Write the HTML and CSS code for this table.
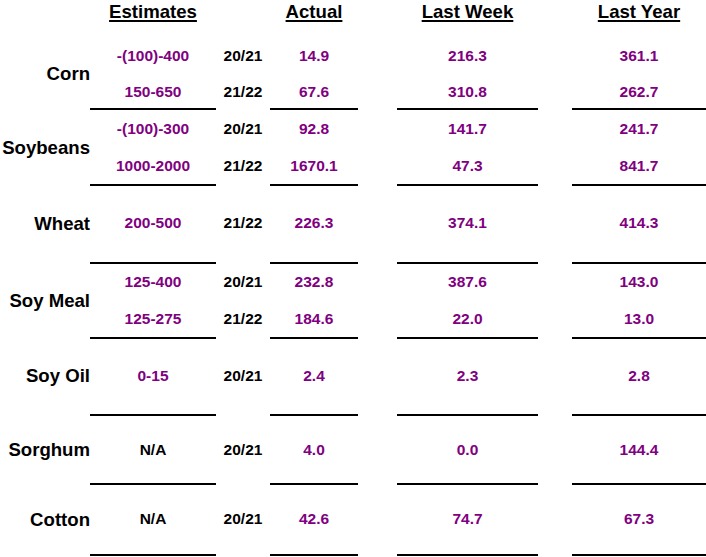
FILE: index.html
```html
<!DOCTYPE html>
<html lang="en">
<head>
<meta charset="utf-8">
<title>Export Sales</title>
<link rel="stylesheet" href="styles.css">
</head>
<body>
<div class="sheet">
  <div class="head">
    <div class="h c-est">Estimates</div>
    <div class="h c-act">Actual</div>
    <div class="h c-wk">Last Week</div>
    <div class="h c-ly">Last Year</div>
  </div>

  <div class="group g-corn">
    <div class="rows">
      <div class="label span2">Corn</div>
      <div class="cell c-est">-(100)-400</div><div class="cell yr c-yr">20/21</div><div class="cell c-act">14.9</div><div class="cell c-wk">216.3</div><div class="cell c-ly">361.1</div>
      <div class="cell c-est">150-650</div><div class="cell yr c-yr">21/22</div><div class="cell c-act">67.6</div><div class="cell c-wk">310.8</div><div class="cell c-ly">262.7</div>
    </div>
    <div class="rules"><span class="rule c-est"></span><span class="rule c-act"></span><span class="rule c-wk"></span><span class="rule c-ly"></span></div>
  </div>

  <div class="group g-soy">
    <div class="rows">
      <div class="label span2">Soybeans</div>
      <div class="cell c-est">-(100)-300</div><div class="cell yr c-yr">20/21</div><div class="cell c-act">92.8</div><div class="cell c-wk">141.7</div><div class="cell c-ly">241.7</div>
      <div class="cell c-est">1000-2000</div><div class="cell yr c-yr">21/22</div><div class="cell c-act">1670.1</div><div class="cell c-wk">47.3</div><div class="cell c-ly">841.7</div>
    </div>
    <div class="rules"><span class="rule c-est"></span><span class="rule c-act"></span><span class="rule c-wk"></span><span class="rule c-ly"></span></div>
  </div>

  <div class="group g-wheat">
    <div class="rows">
      <div class="label">Wheat</div>
      <div class="cell c-est">200-500</div><div class="cell yr c-yr">21/22</div><div class="cell c-act">226.3</div><div class="cell c-wk">374.1</div><div class="cell c-ly">414.3</div>
    </div>
    <div class="rules"><span class="rule c-est"></span><span class="rule c-act"></span><span class="rule c-wk"></span><span class="rule c-ly"></span></div>
  </div>

  <div class="group g-meal">
    <div class="rows">
      <div class="label span2">Soy Meal</div>
      <div class="cell c-est">125-400</div><div class="cell yr c-yr">20/21</div><div class="cell c-act">232.8</div><div class="cell c-wk">387.6</div><div class="cell c-ly">143.0</div>
      <div class="cell c-est">125-275</div><div class="cell yr c-yr">21/22</div><div class="cell c-act">184.6</div><div class="cell c-wk">22.0</div><div class="cell c-ly">13.0</div>
    </div>
    <div class="rules"><span class="rule c-est"></span><span class="rule c-act"></span><span class="rule c-wk"></span><span class="rule c-ly"></span></div>
  </div>

  <div class="group g-oil">
    <div class="rows">
      <div class="label">Soy Oil</div>
      <div class="cell c-est">0-15</div><div class="cell yr c-yr">20/21</div><div class="cell c-act">2.4</div><div class="cell c-wk">2.3</div><div class="cell c-ly">2.8</div>
    </div>
    <div class="rules"><span class="rule c-est"></span><span class="rule c-act"></span><span class="rule c-wk"></span><span class="rule c-ly"></span></div>
  </div>

  <div class="group g-sorghum">
    <div class="rows">
      <div class="label">Sorghum</div>
      <div class="cell na c-est">N/A</div><div class="cell yr c-yr">20/21</div><div class="cell c-act">4.0</div><div class="cell c-wk">0.0</div><div class="cell c-ly">144.4</div>
    </div>
    <div class="rules"><span class="rule c-est"></span><span class="rule c-act"></span><span class="rule c-wk"></span><span class="rule c-ly"></span></div>
  </div>

  <div class="group g-cotton">
    <div class="rows">
      <div class="label">Cotton</div>
      <div class="cell na c-est">N/A</div><div class="cell yr c-yr">20/21</div><div class="cell c-act">42.6</div><div class="cell c-wk">74.7</div><div class="cell c-ly">67.3</div>
    </div>
    <div class="rules"><span class="rule c-est"></span><span class="rule c-act"></span><span class="rule c-wk"></span><span class="rule c-ly"></span></div>
  </div>
</div>
</body>
</html>
```

FILE: styles.css
```css
html, body {
  margin: 0;
  padding: 0;
  background: #ffffff;
}

body {
  font-family: "Liberation Sans", Arial, sans-serif;
  font-weight: bold;
  color: #000000;
}

.sheet {
  width: 706px;
}

.head,
.rows,
.rules {
  display: grid;
  grid-template-columns: 90px 126px 54px 88px 39px 141px 34px 134px;
}

.c-est { grid-column: 2; }
.c-yr  { grid-column: 3; }
.c-act { grid-column: 4; }
.c-wk  { grid-column: 6; }
.c-ly  { grid-column: 8; }

/* header */
.head {
  padding-top: 0.5px;
}

.h {
  font-size: 18.6px;
  line-height: 21px;
  text-align: center;
  text-decoration: underline;
  text-decoration-thickness: 2px;
  text-underline-offset: 2px;
  grid-row: 1;
  white-space: nowrap;
}

/* data rows */
.rows {
  grid-auto-rows: 18px;
  row-gap: 18.5px;
}

.label {
  grid-column: 1;
  grid-row: 1;
  align-self: center;
  text-align: right;
  font-size: 18.6px;
  line-height: 21px;
  white-space: nowrap;
}

.label.span2 {
  grid-row: 1 / span 2;
}

.cell {
  font-size: 15.5px;
  line-height: 18px;
  text-align: center;
  color: #800080;
  white-space: nowrap;
}

.cell.yr,
.cell.na {
  color: #000000;
}

/* rules */
.rules {
  height: 2px;
}

.rule {
  display: block;
  height: 2px;
  background: #000000;
}

/* group spacing */
.g-corn    { padding-top: 25px; }
.g-corn .rules    { margin-top: 7px; }

.g-soy     { padding-top: 10px; }
.g-soy .rules     { margin-top: 9px; }

.g-wheat   { padding-top: 28.8px; }
.g-wheat .rules   { margin-top: 29.7px; }

.g-meal    { padding-top: 9.3px; }
.g-meal .rules    { margin-top: 9.2px; }

.g-oil     { padding-top: 27.7px; }
.g-oil .rules     { margin-top: 29.3px; }

.g-sorghum { padding-top: 25px; }
.g-sorghum .rules { margin-top: 24px; }

.g-cotton  { padding-top: 25.3px; }
.g-cotton .rules  { margin-top: 25.7px; }
```
